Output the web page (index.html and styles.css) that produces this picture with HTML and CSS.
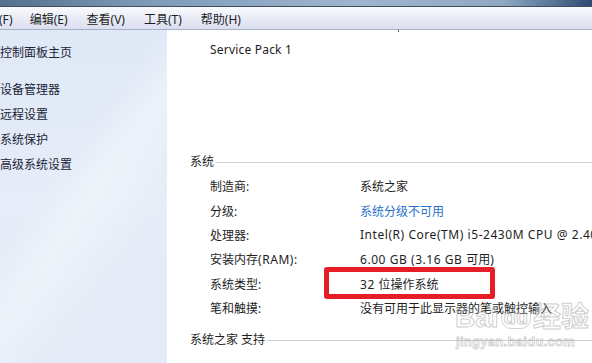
FILE: index.html
```html
<!DOCTYPE html>
<html lang="zh-CN">
<head>
<meta charset="utf-8">
<link rel="stylesheet" href="styles.css">
</head>
<body>
<div class="window">
  <div class="titlebar"></div>
  <div class="menubar">
    <span class="menu first">(F)</span>
    <span class="menu">编辑(E)</span>
    <span class="menu">查看(V)</span>
    <span class="menu">工具(T)</span>
    <span class="menu">帮助(H)</span>
  </div>
  <div class="main">
    <aside class="sidebar">
      <div class="home">控制面板主页</div>
      <ul class="links">
        <li>设备管理器</li>
        <li>远程设置</li>
        <li>系统保护</li>
        <li>高级系统设置</li>
      </ul>
    </aside>
    <section class="content">
      <div class="tick"></div>
      <div class="sp">Service Pack 1</div>
      <div class="heading heading-sys"><span>系统</span></div>
      <div class="rows">
        <div class="label">制造商:</div><div class="value">系统之家</div>
        <div class="label">分级:</div><div class="value link">系统分级不可用</div>
        <div class="label">处理器:</div><div class="value nowrap"><span class="lat">Intel(R) Core(TM) i5-2430M CPU @ 2.40GHz</span></div>
        <div class="label">安装内存<span class="lat">(RAM):</span></div><div class="value"><span class="lat">6.00 GB (3.16 GB </span>可用<span class="lat">)</span></div>
        <div class="label">系统类型:</div><div class="value"><span class="lat">32 </span>位操作系统</div>
        <div class="label">笔和触摸:</div><div class="value">没有可用于此显示器的笔或触控输入</div>
      </div>
      <div class="heading heading-support"><span>系统之家 支持</span></div>
      <div class="highlight"></div>
      <div class="watermark">
        <div class="wm-logo">Bai<span class="wm-du">du</span>经验</div>
        <div class="wm-url">jingyan.baidu.com</div>
      </div>
    </section>
  </div>
</div>
</body>
</html>
```
FILE: styles.css
```css
html, body {
  margin: 0;
  padding: 0;
}
body {
  width: 592px;
  height: 363px;
  overflow: hidden;
  font-family: "Noto Sans", "Noto Sans CJK SC", sans-serif;
  font-size: 12px;
  color: #1e1e1e;
  background: #fff;
}
.window {
  display: flex;
  flex-direction: column;
  height: 363px;
  overflow: hidden;
}
.titlebar {
  height: 6px;
  flex: none;
  background: linear-gradient(90deg, #55708f 0%, #7f9bb8 25%, #9db6cf 60%, #8fa9c3 85%, #2c4a72 100%);
  border-bottom: 1px solid #3d4d60;
}
.menubar {
  height: 23px;
  flex: none;
  display: flex;
  align-items: center;
  padding-top: 3px;
  box-sizing: border-box;
  background: linear-gradient(180deg, #fbfcfe 0%, #eef0f8 35%, #dadff0 100%);
  border-bottom: 1px solid #a9b1c9;
  color: #1e1e1e;
  overflow: hidden;
}
.menu {
  margin-right: 19px;
  line-height: 18px;
}
.menu.first {
  margin-left: -1px;
  margin-right: 17px;
}
.main {
  flex: 1;
  display: flex;
  min-height: 0;
}
.sidebar {
  width: 167px;
  flex: none;
  background:
    linear-gradient(125deg, rgba(255,255,255,0) 0%, rgba(255,255,255,0) 40%, rgba(255,255,255,0.35) 52%, rgba(255,255,255,0) 70%),
    linear-gradient(180deg, #dfe8f6 0%, #e6edf8 50%, #e3ebf7 100%);
  color: #1a2338;
}
.home {
  line-height: 24px;
  margin-top: 11px;
}
.links {
  list-style: none;
  margin: 12px 0 0;
  padding: 0;
}
.links li {
  line-height: 25px;
}
.content {
  flex: 1;
  min-width: 0;
  position: relative;
  background: #fff;
  overflow: hidden;
}
.tick {
  position: absolute;
  left: 231px;
  top: 0;
  width: 1px;
  height: 2px;
  background: #555;
}
.sp {
  padding-left: 43px;
  margin-top: 8px;
  line-height: 24px;
  letter-spacing: 0.2px;
}
.lat {
  letter-spacing: 0.55px;
}
.heading {
  display: flex;
  align-items: center;
  padding-left: 23px;
  line-height: 20px;
}
.heading::after {
  content: "";
  flex: 1;
  height: 1px;
  background: #cfcfcf;
  margin-left: 2px;
}
.heading-sys {
  margin-top: 90px;
}
.rows {
  display: grid;
  grid-template-columns: 150px 1fr;
  padding-left: 43px;
  margin-top: 2px;
  grid-auto-rows: 24.4px;
  align-items: center;
}
.value.link {
  color: #2a72c8;
}
.nowrap {
  white-space: nowrap;
}
.heading-support {
  margin-top: 10px;
}
.highlight {
  position: absolute;
  left: 157px;
  top: 237px;
  width: 161px;
  height: 22px;
  border: 5px solid #e41d26;
  border-radius: 3px;
}
.watermark {
  position: absolute;
  left: 288px;
  top: 272px;
  pointer-events: none;
  opacity: 0.55;
}
.wm-logo {
  font-family: "Liberation Sans", "Noto Sans CJK SC", sans-serif;
  font-size: 28px;
  font-weight: bold;
  line-height: 32px;
  color: rgba(255,255,255,0.3);
  -webkit-text-stroke: 1px #a8a8a8;
  white-space: nowrap;
}
.wm-du {
  display: inline-block;
  font-size: 20px;
  line-height: 22px;
  margin: 0 2px;
  padding: 0 2px;
  border: 1px solid #b0b0b0;
  border-radius: 8px 8px 10px 10px;
  vertical-align: 3px;
}
.wm-url {
  font-family: "Liberation Sans", sans-serif;
  font-size: 13px;
  font-weight: bold;
  line-height: 16px;
  margin-left: 1px;
  color: rgba(255,255,255,0.3);
  -webkit-text-stroke: 0.8px #a8a8a8;
  letter-spacing: 0.3px;
}
```
